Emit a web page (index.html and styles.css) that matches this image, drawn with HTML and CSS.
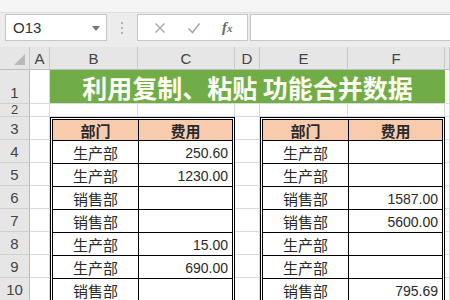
FILE: index.html
```html
<!DOCTYPE html>
<html lang="zh-CN">
<head>
    <meta charset="UTF-8">
    <meta name="viewport" content="width=device-width, initial-scale=1.0">
    <title>合并数据</title>
    <link rel="stylesheet" href="styles.css">
</head>
<body>

    <div class="toolbar">
        <div class="namebox">
            <span>O13</span>
            <svg class="caret" width="8" height="5" viewBox="0 0 8 5"><path d="M0 0h8L4 5z" fill="#7a7a7a"/></svg>
        </div>
        <div class="grip">
            <span></span><span></span><span></span>
        </div>
        <div class="fx-buttons">
            <svg width="12" height="12" viewBox="0 0 12 12"><path d="M1.5 1.5l9 9M10.5 1.5l-9 9" stroke="#a6a6a6" stroke-width="1.4"/></svg>
            <svg width="14" height="12" viewBox="0 0 14 12"><path d="M1.5 6.5l4 4 7-9" stroke="#a6a6a6" stroke-width="1.6" fill="none"/></svg>
            <span class="fx">f<small>x</small></span>
        </div>
        <div class="formula"></div>
    </div>

    <div class="sheet">
        <!-- column headers -->
        <div class="corner">
            <svg width="11" height="11" viewBox="0 0 11 11"><path d="M11 0v11H0z" fill="#b8b8b8"/></svg>
        </div>
        <div class="ch">A</div>
        <div class="ch">B</div>
        <div class="ch">C</div>
        <div class="ch">D</div>
        <div class="ch">E</div>
        <div class="ch">F</div>
        <div class="ch"></div>

        <!-- row 1 -->
        <div class="rh">1</div><div class="c"></div><div class="c"></div>
        <div class="title">利用复制、粘贴 功能合并数据</div>

        <!-- row 2 -->
        <div class="rh rh-short">2</div>
        <div class="c"></div><div class="c"></div><div class="c"></div><div class="c"></div>
        <div class="c"></div><div class="c"></div><div class="c"></div>

        <!-- rows 3 - 10 (A, D, G columns) -->
        <div class="rh">3</div><div class="c"></div><div class="c"></div><div class="c"></div>
        <div class="rh">4</div><div class="c"></div><div class="c"></div><div class="c"></div>
        <div class="rh">5</div><div class="c"></div><div class="c"></div><div class="c"></div>
        <div class="rh">6</div><div class="c"></div><div class="c"></div><div class="c"></div>
        <div class="rh">7</div><div class="c"></div><div class="c"></div><div class="c"></div>
        <div class="rh">8</div><div class="c"></div><div class="c"></div><div class="c"></div>
        <div class="rh">9</div><div class="c"></div><div class="c"></div><div class="c"></div>
        <div class="rh">10</div><div class="c"></div><div class="c"></div><div class="c"></div>

        <div class="tbl tbl-left">
            <div class="th">部门</div><div class="th">费用</div>
            <div class="td">生产部</div><div class="td num">250.60</div>
            <div class="td">生产部</div><div class="td num">1230.00</div>
            <div class="td">销售部</div><div class="td num"></div>
            <div class="td">销售部</div><div class="td num"></div>
            <div class="td">生产部</div><div class="td num">15.00</div>
            <div class="td">生产部</div><div class="td num">690.00</div>
            <div class="td">销售部</div><div class="td num"></div>
        </div>

        <div class="tbl tbl-right">
            <div class="th">部门</div><div class="th">费用</div>
            <div class="td">生产部</div><div class="td num"></div>
            <div class="td">生产部</div><div class="td num"></div>
            <div class="td">销售部</div><div class="td num">1587.00</div>
            <div class="td">销售部</div><div class="td num">5600.00</div>
            <div class="td">生产部</div><div class="td num"></div>
            <div class="td">生产部</div><div class="td num"></div>
            <div class="td">销售部</div><div class="td num">795.69</div>
        </div>
    </div>

</body>
</html>
```

FILE: styles.css
```css
body {
    margin: 0;
    padding: 0;
    width: 450px;
    height: 300px;
    overflow: hidden;
    background: #fff;
    font-family: "Liberation Sans", Arial, sans-serif;
}

/* formula bar area */
.toolbar {
    height: 47px;
    box-sizing: border-box;
    background: #ececec;
    border-top: 12px solid #f5f5f5;
    box-shadow: inset 0 1px 0 #dedede;
    display: flex;
    align-items: flex-start;
    padding-top: 2px;
}

.namebox {
    width: 102px;
    height: 27px;
    box-sizing: border-box;
    margin-left: 5px;
    background: #fff;
    border: 1px solid #c6c6c6;
    display: flex;
    align-items: center;
    justify-content: space-between;
    padding: 0 6px 0 7px;
    font-size: 15px;
    color: #333;
}

.caret {
    margin-top: 1px;
}

.grip {
    width: 30px;
    height: 27px;
    display: flex;
    flex-direction: column;
    align-items: center;
    justify-content: center;
    gap: 3px;
}

.grip span {
    width: 2px;
    height: 2px;
    background: #b5b5b5;
}

.fx-buttons {
    width: 111px;
    height: 27px;
    box-sizing: border-box;
    background: #fff;
    border: 1px solid #c6c6c6;
    display: flex;
    align-items: center;
    justify-content: space-around;
    padding: 0 4px 0 6px;
}

.fx {
    font-family: "Liberation Serif", serif;
    font-style: italic;
    font-weight: bold;
    font-size: 15px;
    color: #6a6a6a;
}

.fx small {
    font-size: 11px;
}

.formula {
    flex: 1;
    height: 27px;
    box-sizing: border-box;
    margin-left: 2px;
    background: #fff;
    border: 1px solid #c6c6c6;
    border-right: none;
}

/* the sheet grid */
.sheet {
    display: grid;
    grid-template-columns: 30px 20px 88px 97px 25px 88px 97px 1fr;
    grid-template-rows: 23px 34px 13px repeat(8, 23px);
}

.corner, .ch {
    background: #e6e6e6;
    border-right: 1px solid #c9c9c9;
    border-bottom: 1px solid #bdbdbd;
    box-sizing: border-box;
}

.corner {
    display: flex;
    align-items: flex-end;
    justify-content: flex-end;
    padding: 0 4px 4px 0;
}

.ch {
    font-size: 15px;
    color: #444;
    text-align: center;
    line-height: 23px;
}

.rh {
    background: #e6e6e6;
    border-right: 1px solid #bdbdbd;
    border-bottom: 1px solid #d0d0d0;
    box-sizing: border-box;
    font-size: 15px;
    color: #444;
    text-align: center;
    display: flex;
    align-items: flex-end;
    justify-content: center;
    line-height: 20px;
    overflow: hidden;
}

.rh-short {
    font-size: 13px;
    line-height: 12px;
    overflow: visible;
}

.c {
    border-right: 1px solid #dadada;
    border-bottom: 1px solid #dadada;
    box-sizing: border-box;
}

.title {
    grid-column: 3 / 8;
    grid-row: 2;
    background: #70ad47;
    color: #fffdf3;
    font-family: "Noto Sans CJK SC", sans-serif;
    font-weight: bold;
    font-size: 25px;
    display: flex;
    align-items: center;
    justify-content: center;
    white-space: pre;
    border-bottom: 1px solid #dadada;
}

/* the two data tables */
.tbl {
    grid-row: 4 / 12;
    display: grid;
    grid-template-columns: 86px 1fr;
    grid-template-rows: 21px;
    grid-auto-rows: 23px;
    border: 3px double #000;
    border-bottom: none;
    background: #fff;
}

.tbl-left {
    grid-column: 3 / 5;
}

.tbl-right {
    grid-column: 6 / 8;
}

.th, .td {
    border-bottom: 1px solid #000;
    box-sizing: border-box;
    font-family: "Noto Sans CJK SC", sans-serif;
    font-size: 15px;
    color: #2a2a2a;
    display: flex;
    align-items: flex-end;
    justify-content: center;
    line-height: 20px;
}

.th:nth-child(odd), .td:nth-child(odd) {
    border-right: 1px solid #000;
}

.th {
    background: #f8cbad;
    font-weight: bold;
    line-height: 19px;
}

.td.num {
    justify-content: flex-end;
    padding-right: 4px;
    font-family: "Liberation Sans", Arial, sans-serif;
    font-size: 14px;
    line-height: 19px;
}
```
